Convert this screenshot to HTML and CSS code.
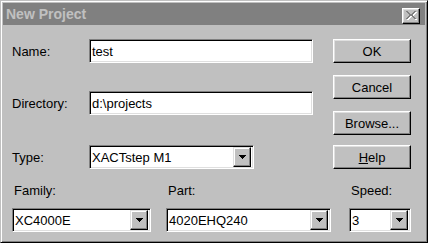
FILE: index.html
```html
<!DOCTYPE html>
<html>
  <head>
    <meta charset="utf-8">
    <title>New Project</title>
    <link rel="stylesheet" href="styles.css">
  </head>
  <body>
    <div class="window">
      <div class="titlebar">
        <span class="title">New Project</span>
        <span class="close">
          <svg width="11" height="9" viewBox="0 0 11 9" shape-rendering="crispEdges">
            <path transform="translate(1 1)" fill="#fff" d="M0 0h2v1h-2zM8 0h2v1h-2zM1 1h2v1h-2zM7 1h2v1h-2zM2 2h2v1h-2zM6 2h2v1h-2zM3 3h4v2h-4zM2 5h2v1h-2zM6 5h2v1h-2zM1 6h2v1h-2zM7 6h2v1h-2zM0 7h2v1h-2zM8 7h2v1h-2z"/>
            <path fill="#808080" d="M0 0h2v1h-2zM8 0h2v1h-2zM1 1h2v1h-2zM7 1h2v1h-2zM2 2h2v1h-2zM6 2h2v1h-2zM3 3h4v2h-4zM2 5h2v1h-2zM6 5h2v1h-2zM1 6h2v1h-2zM7 6h2v1h-2zM0 7h2v1h-2zM8 7h2v1h-2z"/>
          </svg>
        </span>
      </div>

      <div class="content">
        <div class="top">
          <div class="fields">
            <div class="row">
              <span class="label">Name:</span>
              <div class="textbox">test</div>
            </div>
            <div class="row row-dir">
              <span class="label">Directory:</span>
              <div class="textbox">d:\projects</div>
            </div>
            <div class="row row-type">
              <span class="label">Type:</span>
              <div class="combo combo-type">
                <span class="value">XACTstep M1</span>
                <span class="drop"><svg width="7" height="4" viewBox="0 0 7 4" shape-rendering="crispEdges"><path d="M0 0h7v1h-1v1h-1v1h-1v1h-1v-1h-1v-1h-1v-1h-1z"/></svg></span>
              </div>
            </div>
          </div>

          <div class="buttons">
            <div class="btn">OK</div>
            <div class="btn">Cancel</div>
            <div class="btn">Browse...</div>
            <div class="btn btn-help"><u>H</u>elp</div>
          </div>
        </div>

        <div class="bottom">
          <div class="col col-family">
            <div class="col-label">Family:</div>
            <div class="combo">
              <span class="value">XC4000E</span>
              <span class="drop"><svg width="7" height="4" viewBox="0 0 7 4" shape-rendering="crispEdges"><path d="M0 0h7v1h-1v1h-1v1h-1v1h-1v-1h-1v-1h-1v-1h-1z"/></svg></span>
            </div>
          </div>
          <div class="col col-part">
            <div class="col-label">Part:</div>
            <div class="combo">
              <span class="value">4020EHQ240</span>
              <span class="drop"><svg width="7" height="4" viewBox="0 0 7 4" shape-rendering="crispEdges"><path d="M0 0h7v1h-1v1h-1v1h-1v1h-1v-1h-1v-1h-1v-1h-1z"/></svg></span>
            </div>
          </div>
          <div class="col col-speed">
            <div class="col-label">Speed:</div>
            <div class="combo">
              <span class="value">3</span>
              <span class="drop"><svg width="7" height="4" viewBox="0 0 7 4" shape-rendering="crispEdges"><path d="M0 0h7v1h-1v1h-1v1h-1v1h-1v-1h-1v-1h-1v-1h-1z"/></svg></span>
            </div>
          </div>
        </div>
      </div>
    </div>
  </body>
</html>
```

FILE: styles.css
```css
body {
  margin: 0;
  background-color: #c0c0c0;
  font-family: "Liberation Sans", Arial, sans-serif;
  font-size: 13px;
  color: #000;
}

.window {
  width: 428px;
  height: 243px;
  box-sizing: border-box;
  padding: 2px;
  border: 1px solid;
  border-color: #c0c0c0 #000 #000 #c0c0c0;
  box-shadow: inset 1px 1px #fff, inset -1px -1px #808080;
  background-color: #c0c0c0;
}

/* title bar (inactive) */
.titlebar {
  height: 22px;
  background-color: #808080;
  display: flex;
  align-items: center;
  justify-content: space-between;
  padding: 0 5px 0 3px;
}
.title {
  color: #c0c0c0;
  font-size: 14px;
  font-weight: bold;
  line-height: 16px;
}
.close {
  width: 18px;
  height: 16px;
  box-sizing: border-box;
  margin-top: 3px;
  background-color: #c0c0c0;
  border: 1px solid;
  border-color: #fff #000 #000 #fff;
  box-shadow: inset -1px -1px #808080, inset 1px 1px #dfdfdf;
  display: flex;
  align-items: center;
  justify-content: center;
}

.content {
  padding: 14px 0 0 9px;
}

.top {
  display: flex;
  gap: 20px;
}
.fields {
  width: 301px;
}
.row {
  display: flex;
  align-items: center;
  height: 24px;
}
.row-dir {
  margin-top: 28px;
}
.row-type {
  margin-top: 30px;
}
.label {
  width: 77px;
}

.textbox {
  width: 224px;
  height: 24px;
  box-sizing: border-box;
  background-color: #fff;
  border: 1px solid;
  border-color: #808080 #fff #fff #808080;
  box-shadow: inset 1px 1px #000, inset -1px -1px #dfdfdf;
  padding-left: 2px;
  display: flex;
  align-items: center;
}

.combo {
  height: 24px;
  box-sizing: border-box;
  background-color: #fff;
  border: 1px solid;
  border-color: #808080 #fff #fff #808080;
  box-shadow: inset 1px 1px #000, inset -1px -1px #dfdfdf;
  padding: 2px;
  display: flex;
  align-items: center;
}
.combo .value {
  flex: 1;
}
.combo-type {
  width: 165px;
}
.drop {
  width: 18px;
  height: 20px;
  box-sizing: border-box;
  background-color: #c0c0c0;
  border: 1px solid;
  border-color: #dfdfdf #000 #000 #dfdfdf;
  box-shadow: inset -1px -1px #808080, inset 1px 1px #fff;
  display: flex;
  align-items: center;
  justify-content: center;
}

.buttons {
  width: 78px;
  display: flex;
  flex-direction: column;
  gap: 12px;
}
.btn {
  height: 24px;
  box-sizing: border-box;
  border: 1px solid;
  border-color: #fff #000 #000 #fff;
  box-shadow: inset -1px -1px #808080, inset 1px 1px #dfdfdf;
  display: flex;
  align-items: center;
  justify-content: center;
}
.btn-help {
  margin-top: -2px;
}

.bottom {
  display: flex;
  margin-top: 14px;
}
.col-label {
  line-height: 16px;
  padding-left: 2px;
  margin-bottom: 9px;
}
.col-family {
  width: 139px;
}
.col-part {
  width: 165px;
  margin-left: 15px;
}
.col-speed {
  width: 62px;
  margin-left: 18px;
}
```
